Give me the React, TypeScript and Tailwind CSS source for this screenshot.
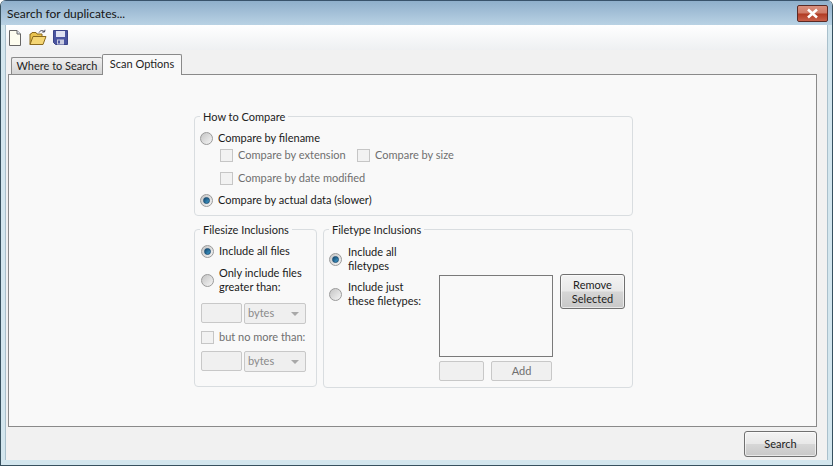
import React from "react";

const Radio = ({ on }: { on?: boolean }) => (
  <span className="relative block h-[13px] w-[13px] shrink-0 rounded-full border border-[#9a9a9a] bg-gradient-to-br from-[#c4c4c4] to-[#f6f6f6]">
    {on && (
      <span className="absolute left-[2px] top-[2px] h-[7px] w-[7px] rounded-full border border-[#1c4f75] bg-gradient-to-br from-[#17496f] to-[#3f9fd0]" />
    )}
  </span>
);

const Check = () => <span className="block h-[13px] w-[13px] shrink-0 border border-[#c6c6c6] bg-[#f2f2f2]" />;

const Group = ({ title, className, children }: { title: string; className: string; children: React.ReactNode }) => (
  <div className={`relative rounded-[4px] border border-[#d9dde0] ${className}`}>
    <span className="absolute left-[5px] top-[-8px] bg-[#f9f9f9] px-[3px] text-[11px] leading-[15px] text-[#222]">{title}</span>
    {children}
  </div>
);

const Combo = () => (
  <div className="flex h-[21px] w-[62px] items-center justify-between rounded-[2px] border border-[#c8c8c8] bg-[#efefef] pl-[3px] pr-[6px] text-[11px] text-[#8a8a8a]">
    <span>bytes</span>
    <span className="h-0 w-0 border-x-[4px] border-t-[4px] border-x-transparent border-t-[#a8a8a8]" />
  </div>
);

const Field = ({ w }: { w: string }) => <div className={`h-[20px] rounded-[2px] border border-[#c8c8c8] bg-[#f0f0f0] ${w}`} />;

const btn = "rounded-[3px] border border-[#707070] bg-[linear-gradient(#f3f3f3_0%,#e8e8e8_48%,#d6d6d6_52%,#c8c8c8_100%)] text-[11px] text-[#222] shadow-[inset_0_0_0_1px_rgba(255,255,255,0.6)]";

export default function App() {
  return (
    <div
      className="flex h-[466px] w-[833px] flex-col overflow-hidden rounded-t-[6px] border-x border-b border-[#37515f] bg-[#d3e6ee] text-[#1a1a1a]"
      style={{ fontFamily: 'Lato, "Liberation Sans", Arial, sans-serif' }}
    >
      {/* title bar */}
      <div className="flex h-[25px] shrink-0 items-start justify-between border-t border-[#39536b] bg-[linear-gradient(#8fafcb,#b9d2e4)] pl-[6px] pr-[4px]">
        <span className="mt-[5px] text-[12px] leading-[15px] text-[#151515]">Search for duplicates...</span>
        <div className="mt-[4px] flex h-[17px] w-[31px] items-center justify-center rounded-[2px] border border-[#5a2a25] bg-[linear-gradient(#d98f7d_0%,#cf7a66_48%,#b03a22_52%,#c8604a_100%)]">
          <svg width="13" height="11" viewBox="0 0 13 11">
            <path d="M2 1.5 L11 9.5 M11 1.5 L2 9.5" stroke="#fff" strokeWidth="2.6" />
          </svg>
        </div>
      </div>

      {/* client */}
      <div className="mx-[4px] flex min-h-0 flex-1 flex-col border-x border-[#a9c0cc] bg-[#f1f1f1]">
        {/* toolbar */}
        <div className="flex h-[25px] shrink-0 items-center gap-[6px] bg-[linear-gradient(#ffffff,#eef0f2)] pl-[1px]">
          <svg width="16" height="18" viewBox="0 0 16 18">
            <path d="M2.5 1.5 H10 L13.5 5 V16.5 H2.5 Z" fill="#fdfdf0" stroke="#666" />
            <path d="M10 1.5 V5 H13.5" fill="#dfe6ee" stroke="#666" />
          </svg>
          <svg width="18" height="18" viewBox="0 0 18 18">
            <path d="M1 15.5 V5 H2 L3 3.5 H7 L8 5 H13 V7" fill="#e9c34f" stroke="#8a6a1e" />
            <path d="M1 15.5 L4 7.5 H17 L14 15.5 Z" fill="#f4d675" stroke="#8a6a1e" />
            <path d="M10 3.5 C11.5 1 14 1 15.5 3 M15.5 3 L16 0.8 M15.5 3 L13.2 3" fill="none" stroke="#445" strokeWidth="1" />
          </svg>
          <svg width="15" height="15" viewBox="0 0 15 15">
            <path d="M.5 .5 H14.5 V14.5 H2.5 L.5 12.5 Z" fill="#4a55a0" stroke="#3a4488" />
            <rect x="3" y="1" width="9" height="6" fill="#dfe2f2" />
            <rect x="4" y="9.5" width="7" height="5" fill="#c9cce0" />
            <rect x="5" y="10.5" width="2" height="3" fill="#4a55a0" />
          </svg>
        </div>

        {/* tab strip */}
        <div className="flex h-[24px] shrink-0 items-end pl-[5px] pt-[2px]">
          <div className="mb-[-1px] flex h-[18px] w-[91px] items-center justify-center whitespace-nowrap rounded-t-[2px] border border-r-0 border-[#8a8a8a] bg-[linear-gradient(#f0f0f0,#d4d4d4)] text-[11px] text-[#1e1e1e]">
            Where to Search
          </div>
          <div className="relative z-10 mb-[-1px] flex h-[21px] w-[80px] items-center justify-center whitespace-nowrap rounded-t-[2px] border border-b-0 border-[#8a8a8a] bg-[#f9f9f9] pb-[2px] text-[11px] text-[#1e1e1e]">
            Scan Options
          </div>
        </div>

        {/* tab page */}
        <div className="ml-[2px] mr-[10px] h-[353px] shrink-0 border border-[#8a8a8a] bg-[#f9f9f9] pl-[185px] pt-[41px]">
          <div className="flex w-[439px] flex-col gap-[13px]">
            <Group title="How to Compare" className="h-[100px] pl-[5px] pt-[13px]">
              <div className="flex h-[16px] items-center gap-[5px] text-[11px]">
                <Radio />
                <span>Compare by filename</span>
              </div>
              <div className="ml-[20px] flex h-[18px] items-center text-[11px] text-[#6f6f6f]">
                <Check />
                <span className="ml-[5px] w-[104px] whitespace-nowrap">Compare by extension</span>
                <span className="ml-[15px]"><Check /></span>
                <span className="ml-[5px]">Compare by size</span>
              </div>
              <div className="mt-[5px] ml-[20px] flex h-[18px] items-center text-[11px] text-[#6f6f6f]">
                <Check />
                <span className="ml-[5px]">Compare by date modified</span>
              </div>
              <div className="mt-[4px] flex h-[18px] items-center gap-[5px] text-[11px]">
                <Radio on />
                <span>Compare by actual data (slower)</span>
              </div>
            </Group>

            <div className="flex gap-[6px]">
              <Group title="Filesize Inclusions" className="h-[158px] w-[123px] shrink-0 pl-[6px] pt-[13px]">
                <div className="flex h-[16px] items-center gap-[5px] text-[11px]">
                  <Radio on />
                  <span>Include all files</span>
                </div>
                <div className="mt-[7px] flex items-center gap-[5px] text-[11px] leading-[14px]">
                  <Radio />
                  <span>Only include files<br />greater than:</span>
                </div>
                <div className="mt-[9px] flex gap-[2px]">
                  <Field w="w-[41px]" />
                  <Combo />
                </div>
                <div className="mt-[5px] flex h-[16px] items-center gap-[5px] text-[11px] text-[#6f6f6f]">
                  <Check />
                  <span>but no more than:</span>
                </div>
                <div className="mt-[6px] flex gap-[2px]">
                  <Field w="w-[41px]" />
                  <Combo />
                </div>
              </Group>

              <Group title="Filetype Inclusions" className="flex h-[159px] w-[310px] shrink-0 pl-[5px] pt-[15px]">
                <div className="flex w-[110px] shrink-0 flex-col gap-[7px]">
                  <div className="flex items-center gap-[6px] text-[11px] leading-[14px]">
                    <Radio on />
                    <span>Include all<br />filetypes</span>
                  </div>
                  <div className="flex items-center gap-[6px] text-[11px] leading-[14px]">
                    <Radio />
                    <span>Include just<br />these filetypes:</span>
                  </div>
                </div>
                <div className="mt-[30px]">
                  <div className="h-[82px] w-[114px] border border-[#7a7a7a] bg-[#f9f9f9]" />
                  <div className="mt-[4px] flex gap-[7px]">
                    <Field w="w-[45px]" />
                    <div className="flex h-[20px] w-[61px] items-center justify-center rounded-[2px] border border-[#c8c8c8] bg-[#f0f0f0] text-[11px] text-[#6f6f6f]">Add</div>
                  </div>
                </div>
                <button className={`${btn} ml-[7px] mt-[29px] h-[35px] w-[65px] leading-[14px]`}>Remove<br />Selected</button>
              </Group>
            </div>
          </div>
        </div>

        {/* footer */}
        <div className="flex flex-1 items-start justify-end pr-[10px] pt-[4px]">
          <button className={`${btn} h-[26px] w-[73px]`}>Search</button>
        </div>
      </div>
      <div className="h-[5px] shrink-0" />
    </div>
  );
}
